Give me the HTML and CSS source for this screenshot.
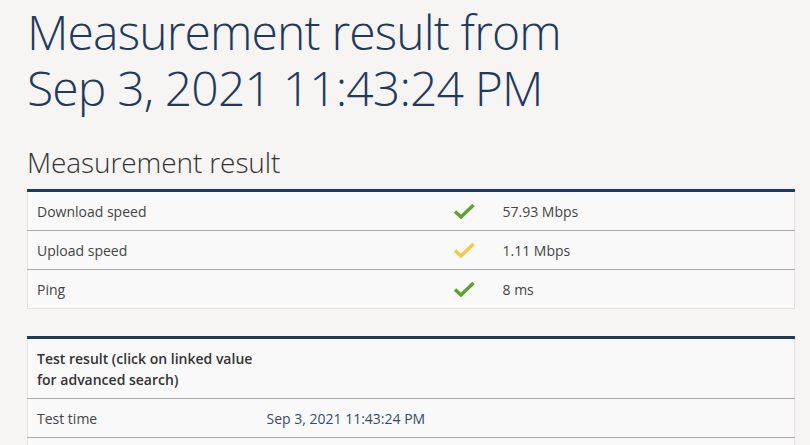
FILE: index.html
```html
<!DOCTYPE html>
<html lang="en">
<head>
<meta charset="utf-8">
<title>Measurement result</title>
<link rel="stylesheet" href="styles.css">
</head>
<body>
<main class="page">
  <h1 class="title">Measurement result from<br>Sep 3, 2021 11:43:24 PM</h1>
  <h2 class="subtitle">Measurement result</h2>
  <table class="result-table">
    <colgroup><col class="c-label"><col class="c-icon"><col></colgroup>
    <tr>
      <td>Download speed</td>
      <td class="icon-cell"><svg class="check green" viewBox="0 0 22 16"><polyline points="2,8.5 8,14 20.5,2"/></svg></td>
      <td>57.93 Mbps</td>
    </tr>
    <tr>
      <td>Upload speed</td>
      <td class="icon-cell"><svg class="check yellow" viewBox="0 0 22 16"><polyline points="2,8.5 8,14 20.5,2"/></svg></td>
      <td>1.11 Mbps</td>
    </tr>
    <tr>
      <td>Ping</td>
      <td class="icon-cell"><svg class="check green" viewBox="0 0 22 16"><polyline points="2,8.5 8,14 20.5,2"/></svg></td>
      <td>8 ms</td>
    </tr>
  </table>
  <table class="result-table detail-table">
    <colgroup><col class="c-detail"><col></colgroup>
    <tr>
      <th>Test result (click on linked value<br>for advanced search)</th>
      <th></th>
    </tr>
    <tr>
      <td>Test time</td>
      <td class="link-value">Sep 3, 2021 11:43:24 PM</td>
    </tr>
    <tr>
      <td>&nbsp;</td>
      <td></td>
    </tr>
  </table>
</main>
</body>
</html>
```

FILE: styles.css
```css
html, body {
  margin: 0;
  padding: 0;
  background: #f6f5f4;
  font-family: "Open Sans", "Liberation Sans", sans-serif;
  color: #444;
  overflow: hidden;
}

.page {
  padding: 4px 15px 0 27px;
  width: 768px;
}

.title {
  margin: 0;
  font-weight: 300;
  font-size: 48px;
  line-height: 56px;
  color: #1f3a60;
  letter-spacing: -0.85px;
}

.subtitle {
  margin: 28px 0 0 0;
  font-weight: 300;
  font-size: 28px;
  line-height: 36px;
  color: #333;
  letter-spacing: -0.1px;
}

.result-table {
  width: 768px;
  table-layout: fixed;
  border-collapse: collapse;
  background: #f9f9f9;
  border-top: 3px solid #1f3a60;
  border-left: 1px solid #e2e2e2;
  border-right: 1px solid #e2e2e2;
  margin-top: 9px;
  font-size: 14px;
  line-height: 21px;
}

.result-table td,
.result-table th {
  padding: 8.5px 9px;
  border-bottom: 1px solid #aaa;
  text-align: left;
  vertical-align: middle;
}

.result-table tr:last-child td {
  border-bottom: 1px solid #e2e2e2;
}

.c-label { width: 416px; }
.c-icon { width: 50px; }
.c-detail { width: 230px; }

.check {
  display: block;
  width: 22px;
  height: 16px;
  margin-left: 0;
  fill: none;
  stroke-width: 3.4;
  stroke-linecap: butt;
  stroke-linejoin: miter;
}

.check.green { stroke: #5ba22e; }
.check.yellow { stroke: #f6c646; }

.detail-table {
  margin-top: 27px;
}

.detail-table th {
  font-weight: 600;
  color: #333;
  white-space: nowrap;
}

.link-value {
  color: #354a6e;
}
```
